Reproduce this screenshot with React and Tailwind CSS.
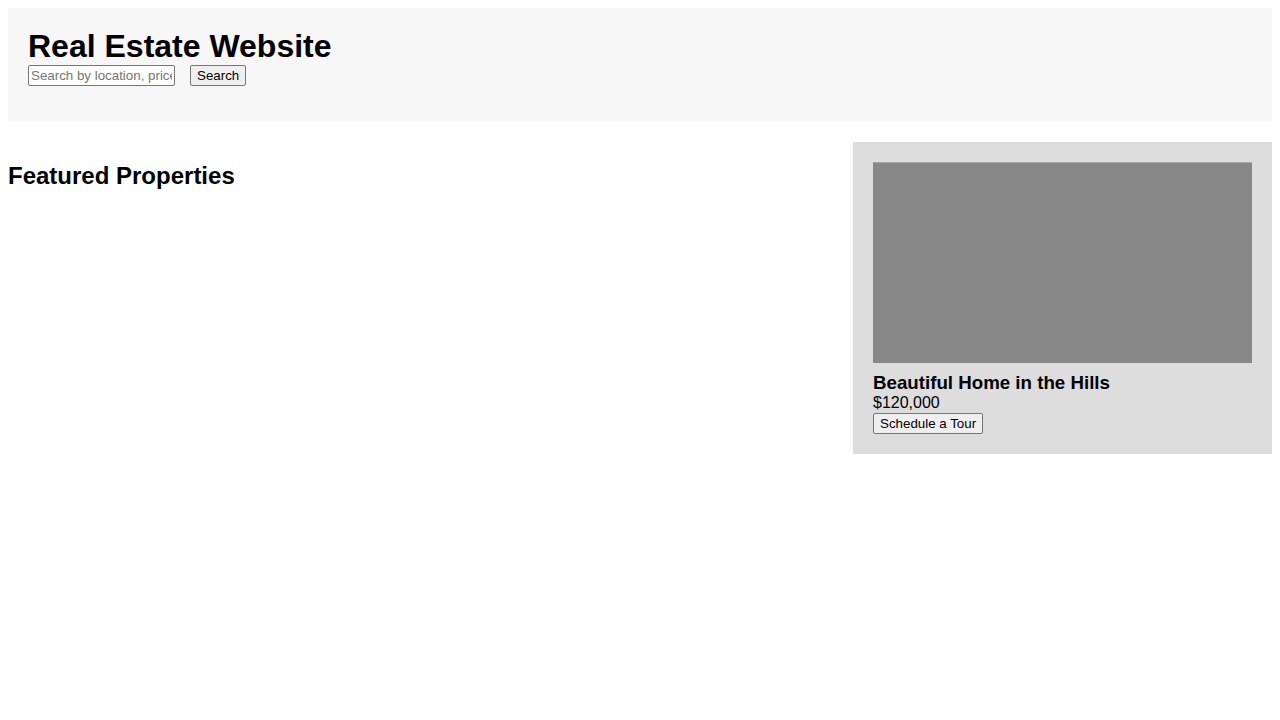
export default function App() {
  return (
    <div className="min-h-screen bg-white p-2 text-black" style={{ fontFamily: '"Liberation Sans", Arial, sans-serif' }}>
      <header className="bg-[#f7f7f7] p-5">
        <h1 className="text-[32px] font-bold leading-[37px]">Real Estate Website</h1>
        <form className="flex items-center mb-4" onSubmit={(e) => e.preventDefault()}>
          <input
            type="text"
            placeholder="Search by location, price, etc."
            className="w-[147px] h-[21px] border border-[#767676] rounded-[2px] px-[2px] text-[13.33px] bg-white placeholder:text-[#757575]"
          />
          <button className="ml-[15px] h-[21px] px-[6px] border border-[#767676] rounded-[2px] bg-[#efefef] text-[13.33px] leading-none">
            Search
          </button>
        </form>
      </header>

      <main className="mt-5 flex justify-between items-start">
        <h2 className="mt-5 text-[24px] font-bold leading-[28px]">Featured Properties</h2>
        <div className="w-[419px] bg-[#dddddd] p-5">
          <div className="h-[201px] bg-[#888888] border-t border-[#a6a6a6]" />
          <h3 className="mt-[9px] text-[18.72px] font-bold leading-[22px]">Beautiful Home in the Hills</h3>
          <p className="text-[16px] leading-[18px]">$120,000</p>
          <button className="block mt-px h-[21px] px-[6px] border border-[#767676] rounded-[2px] bg-[#efefef] text-[13.33px] leading-none">
            Schedule a Tour
          </button>
        </div>
      </main>
    </div>
  );
}
